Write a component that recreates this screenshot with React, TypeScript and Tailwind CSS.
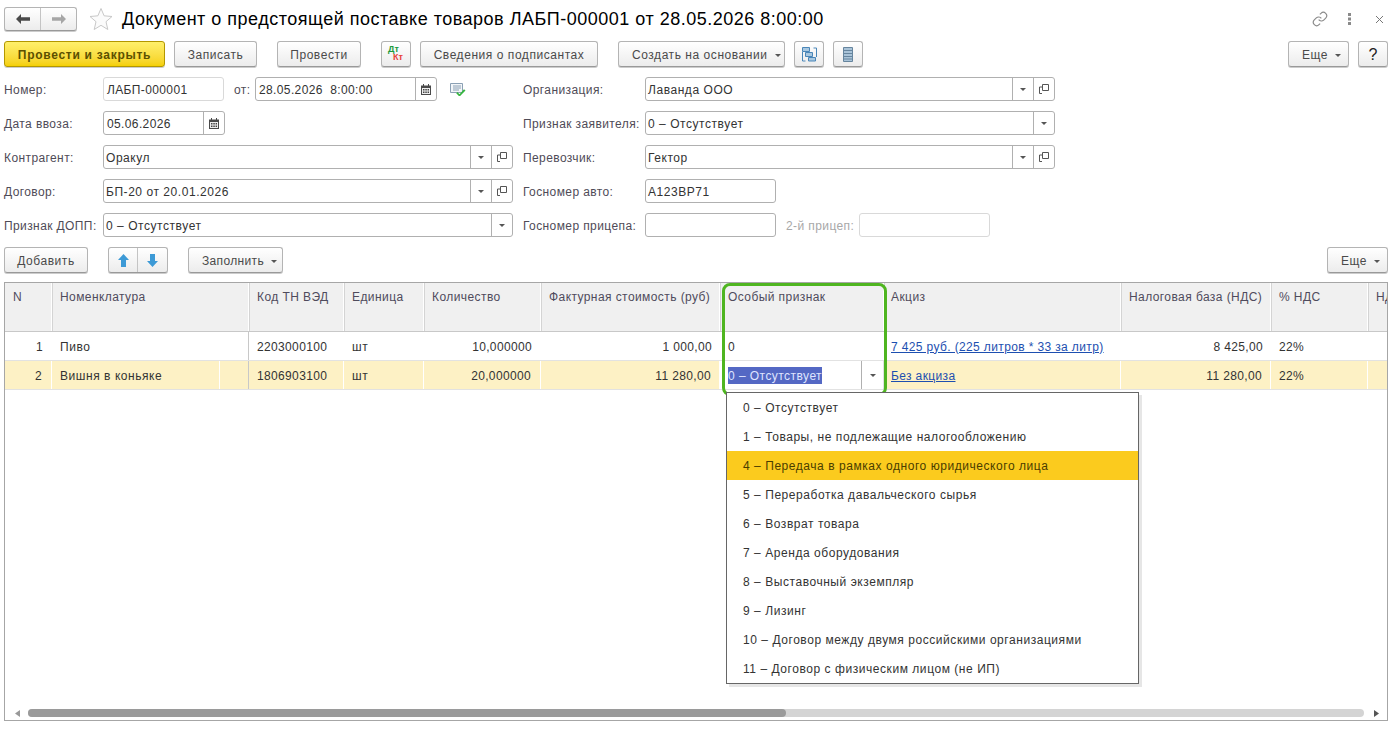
import React from "react";

const Caret = ({ className = "" }: { className?: string }) => (
  <svg width="6" height="3" viewBox="0 0 6 3" className={className}>
    <path d="M0 0h6L3 3z" fill="#555" />
  </svg>
);

const Btn = ({ w, ml = "", caret, children, extra = "" }: { w: string; ml?: string; caret?: boolean; children?: React.ReactNode; extra?: string }) => (
  <div className={`${w} ${ml} ${extra} h-[26px] shrink-0 flex items-center ${caret ? "justify-start pl-[13px]" : "justify-center"} rounded-[3px] border border-[#b4b4b4] border-b-[#999] bg-gradient-to-b from-white to-[#ececec] shadow-[0_1px_0_#ccc] text-[#4a4a4a] pt-px`}>
    {children}
    {caret && <Caret className="ml-[7px] mt-[2px]" />}
  </div>
);

const Seg = ({ w = "w-[21px]", children }: { w?: string; children: React.ReactNode }) => (
  <div className={`${w} h-full shrink-0 border-l border-[#b0b0b0] flex items-center justify-center`}>{children}</div>
);

const CopyIcon = () => (
  <svg width="10" height="10" viewBox="0 0 10 10" fill="none" stroke="#555" strokeWidth="1">
    <path d="M3.500.5h6v6h-6z" />
    <path d="M3 3H.5v6.500H3" />
  </svg>
);

const CalIcon = () => (
  <svg width="10" height="11" viewBox="0 0 10 11">
    <path d="M0 1.500h10V11H0z" fill="#4a4a4a" />
    <path d="M2 0h1v2H2zM7 0h1v2H7z" fill="#4a4a4a" />
    <path d="M1 4h8v6H1z" fill="#eee" />
    <path d="M2 5h1.500v1.500H2zM4.300 5h1.500v1.500H4.300zM6.600 5H8v1.500H6.600zM2 7.500h1.500V9H2zM4.300 7.500h1.500V9H4.300zM6.600 7.500H8V9H6.600z" fill="#444" />
  </svg>
);

const Field = ({ w, text, children, light, disabled, ml = "", num }: { w: string; text?: string; children?: React.ReactNode; light?: boolean; disabled?: boolean; ml?: string; num?: boolean }) => (
  <div className={`${w} ${ml} h-6 shrink-0 flex items-stretch rounded-[3px] border bg-white ${light || disabled ? "border-[#d9d9d9]" : "border-[#b0b0b0]"}`}>
    <div className={`flex-1 min-w-0 pt-px flex items-center text-[#333] whitespace-pre ${num ? "pl-[3px] tracking-[0.37px]" : "pl-[2px]"}`}>{text}</div>
    {children}
  </div>
);

const Label = ({ w, children, ml = "", muted }: { w: string; children: React.ReactNode; ml?: string; muted?: boolean }) => (
  <div className={`${w} ${ml} shrink-0 pt-px flex items-center whitespace-nowrap tracking-[0.4px] ${muted ? "text-[#a8a8a8]" : "text-[#4f4b57]"}`}>{children}</div>
);

const Dd = () => (
  <Seg>
    <Caret />
  </Seg>
);
const Cp = () => (
  <Seg>
    <CopyIcon />
  </Seg>
);

const cols = "grid grid-cols-[47px_197px_95px_80px_117px_179px_164px_237px_150px_97px_40px]";
const headers = ["N", "Номенклатура", "Код ТН ВЭД", "Единица", "Количество", "Фактурная стоимость (руб)", "Особый признак", "Акциз", "Налоговая база (НДС)", "% НДС", "НДС"];

const Link = ({ children }: { children: React.ReactNode }) => <span className="text-[#1d4fb0] underline tracking-[0.37px]">{children}</span>;

const Cell = ({ children, right, line, sel, extra = "" }: { children?: React.ReactNode; right?: boolean; line?: boolean; sel?: boolean; extra?: string }) => (
  <div className={`h-full flex items-center pt-px whitespace-nowrap ${right ? "justify-end pl-2 pr-2" : "pl-2"} ${line ? "border-r border-[#c8c8c8]" : sel ? "border-r border-white" : ""} ${extra}`}>
    {children}
  </div>
);

const Dig = ({ children }: { children: React.ReactNode }) => <span className="tracking-[0.35px]">{children}</span>;

const items = [
  "0 – Отсутствует",
  "1 – Товары, не подлежащие налогообложению",
  "4 – Передача в рамках одного юридического лица",
  "5 – Переработка давальческого сырья",
  "6 – Возврат товара",
  "7 – Аренда оборудования",
  "8 – Выставочный экземпляр",
  "9 – Лизинг",
  "10 – Договор между двумя российскими организациями",
  "11 – Договор с физическим лицом (не ИП)",
];

export default function App() {
  return (
    <div className="w-[1395px] h-[730px] overflow-hidden bg-white pl-1 pr-[7px] pt-[7px] font-['Liberation_Sans',Arial,sans-serif] text-[12px] tracking-[0.55px] text-[#333] leading-none">
      {/* title */}
      <div className="h-6 flex items-center">
        <div className="w-[73px] h-6 flex rounded-[3px] border border-[#b4b4b4] border-b-[#999] bg-gradient-to-b from-white to-[#ececec] shadow-[0_1px_0_#ccc]">
          <div className="w-9 border-r border-[#c4c4c4] flex items-center justify-center">
            <svg width="14" height="10" viewBox="0 0 14 10"><path d="M0 5l5-5v3.300h9v3.400H5V10z" fill="#4a4a4a" /></svg>
          </div>
          <div className="flex-1 flex items-center justify-center">
            <svg width="14" height="10" viewBox="0 0 14 10"><path d="M14 5L9 0v3.300H0v3.400h9V10z" fill="#a6a6a6" /></svg>
          </div>
        </div>
        <svg width="24" height="24" viewBox="0 0 24 24" className="ml-3" fill="#fbfbfb" stroke="#c8c8c8" strokeWidth="1">
          <path d="M12 1.500l3.100 7.300 7.900.7-6 5.200 1.800 7.800L12 18.300l-6.800 4.200L7 14.700 1 9.500l7.900-.7z" />
        </svg>
        <div className="ml-[9px] text-[18px] tracking-[0.5px] text-black whitespace-nowrap">Документ о предстоящей поставке товаров ЛАБП-000001 от 28.05.2026 8:00:00</div>
        <div className="ml-auto flex items-center">
          <svg width="16" height="16" viewBox="0 0 24 24" fill="none" stroke="#8a8a8a" strokeWidth="1.700">
            <path d="M10 13a5 5 0 0 0 7.540.54l3-3a5 5 0 0 0-7.070-7.070l-1.720 1.710" />
            <path d="M14 11a5 5 0 0 0-7.540-.54l-3 3a5 5 0 0 0 7.070 7.070l1.710-1.710" />
          </svg>
          <svg width="4" height="12" viewBox="0 0 4 12" className="ml-[20px]" fill="#8a8a8a">
            <path d="M0 0h3v3H0zM0 4.500h3v3H0zM0 9h3v3H0z" />
          </svg>
          <svg width="9" height="9" viewBox="0 0 9 9" className="ml-[23px] mr-[4px]" stroke="#777" strokeWidth="1"><path d="M1 1l7 7M8 1L1 8" /></svg>
        </div>
      </div>

      {/* buttons */}
      <div className="mt-[10px] h-[26px] flex items-center">
        <div className="w-[161px] h-[26px] shrink-0 pt-px flex items-center justify-center rounded-[3px] border border-[#b39700] bg-gradient-to-b from-[#fff06a] to-[#f5d000] shadow-[0_1px_0_#ccc] font-bold tracking-[0.72px] text-[#5c5000]">Провести и закрыть</div>
        <Btn w="w-[83px]" ml="ml-[9px]">Записать</Btn>
        <Btn w="w-[84px]" ml="ml-[20px]">Провести</Btn>
        <Btn w="w-[30px]" ml="ml-[20px]" extra="relative">
          <span className="absolute left-[6px] top-[3px] text-[9px] tracking-normal font-bold text-[#1a9a3c]">Дт</span>
          <span className="absolute left-[11px] top-[11px] text-[9px] tracking-normal font-bold text-[#e8413a]">Кт</span>
        </Btn>
        <Btn w="w-[178px]" ml="ml-[9px]">Сведения о подписантах</Btn>
        <Btn w="w-[167px]" ml="ml-[20px]" caret>Создать на основании</Btn>
        <Btn w="w-[30px]" ml="ml-[9px]">
          <svg width="15" height="15" viewBox="0 0 15 15" fill="#a9c8e0" stroke="#4a86b8">
            <path d="M.5 5v9h3" fill="none" />
            <path d="M14.500 10V1h-3" fill="none" />
            <path d="M.5.500h7v4h-7z" />
            <path d="M3.500 5.500h7v4h-7z" />
            <path d="M6.500 10.500h7v3.500h-7z" />
          </svg>
        </Btn>
        <Btn w="w-[30px]" ml="ml-[9px]">
          <svg width="10" height="15" viewBox="0 0 10 15" fill="#a9c3d8" stroke="#66859e">
            <path d="M.5.500h9v14h-9z" />
            <path d="M.5 3.500h9M.5 6.500h9M.5 9.500h9M.5 12h9" fill="none" />
          </svg>
        </Btn>
        <Btn w="w-[61px]" ml="ml-auto" caret>Еще</Btn>
        <Btn w="w-[30px]" ml="ml-[9px]"><span className="text-[16px] tracking-normal text-[#222]">?</span></Btn>
      </div>

      {/* form */}
      <div className="mt-[10px] flex flex-col gap-[10px]">
        <div className="h-6 flex">
          <Label w="w-[99px]">Номер:</Label>
          <Field w="w-[121px]" text="ЛАБП-000001" light num />
          <Label w="w-[21px]" ml="ml-[10px]">от:</Label>
          <Field w="w-[182px]" text="28.05.2026  8:00:00" num>
            <Seg w="w-[21px]"><CalIcon /></Seg>
          </Field>
          <div className="w-[86px] shrink-0 pl-[13px] flex items-center">
            <svg width="16" height="14" viewBox="0 0 16 14">
              <path d="M.5 1.500h12v9H.5z" fill="#f2f5f8" stroke="#8ba0b4" />
              <path d="M3 4h8M3 6h8M3 8h6" stroke="#8ba0b4" />
              <path d="M7.500 10l2 2.200 4.500-5 1.500 1.400-6 6-3.300-3.300z" fill="#35b53f" />
            </svg>
          </div>
          <Label w="w-[122px]">Организация:</Label>
          <Field w="w-[410px]" text="Лаванда ООО"><Dd /><Cp /></Field>
        </div>
        <div className="h-6 flex">
          <Label w="w-[99px]">Дата ввоза:</Label>
          <Field w="w-[122px]" text="05.06.2026" num><Seg><CalIcon /></Seg></Field>
          <div className="w-[298px] shrink-0" />
          <Label w="w-[122px]">Признак заявителя:</Label>
          <Field w="w-[410px]" text="0 – Отсутствует"><Dd /></Field>
        </div>
        <div className="h-6 flex">
          <Label w="w-[99px]">Контрагент:</Label>
          <Field w="w-[410px]" text="Оракул"><Dd /><Cp /></Field>
          <div className="w-[10px] shrink-0" />
          <Label w="w-[122px]">Перевозчик:</Label>
          <Field w="w-[410px]" text="Гектор"><Dd /><Cp /></Field>
        </div>
        <div className="h-6 flex">
          <Label w="w-[99px]">Договор:</Label>
          <Field w="w-[410px]" text="БП-20 от 20.01.2026"><Dd /><Cp /></Field>
          <div className="w-[10px] shrink-0" />
          <Label w="w-[122px]">Госномер авто:</Label>
          <Field w="w-[131px]" text="А123ВР71" />
        </div>
        <div className="h-6 flex">
          <Label w="w-[99px]">Признак ДОПП:</Label>
          <Field w="w-[410px]" text="0 – Отсутствует"><Dd /></Field>
          <div className="w-[10px] shrink-0" />
          <Label w="w-[122px]">Госномер прицепа:</Label>
          <Field w="w-[131px]" />
          <Label w="w-[73px]" ml="ml-[10px]" muted>2-й прицеп:</Label>
          <Field w="w-[131px]" disabled />
        </div>
      </div>

      {/* table toolbar */}
      <div className="mt-[10px] h-[26px] flex items-center">
        <Btn w="w-[84px]">Добавить</Btn>
        <div className="ml-5 w-[60px] h-[26px] flex rounded-[3px] border border-[#b4b4b4] border-b-[#999] bg-gradient-to-b from-white to-[#ececec] shadow-[0_1px_0_#ccc]">
          <div className="w-[29px] border-r border-[#c4c4c4] flex items-center justify-center">
            <svg width="11" height="13" viewBox="0 0 11 13"><path d="M5.500 0L11 6H8v7H3V6H0z" fill="#3d9ad6" /></svg>
          </div>
          <div className="flex-1 flex items-center justify-center">
            <svg width="11" height="13" viewBox="0 0 11 13"><path d="M5.500 13L0 7h3V0h5v7h3z" fill="#3d9ad6" /></svg>
          </div>
        </div>
        <Btn w="w-[95px]" ml="ml-5" caret><span className="tracking-[0.35px]">Заполнить</span></Btn>
        <Btn w="w-[61px]" ml="ml-auto" caret>Еще</Btn>
      </div>

      {/* table */}
      <div className="relative mt-[9px] w-[1384px] h-[439px] border border-[#a6a6a6]">
        <div className="h-[423px] overflow-hidden">
          <div className={`${cols} h-[49px] border-b border-[#c8c8c8]`}>
            {headers.map((h, i) => (
              <div key={i} className={`bg-[#f0f0f0] h-[48px] border-r border-white pt-2 whitespace-nowrap tracking-[0.42px] text-[#4f4b5c] ${i === 0 ? "pl-2" : i === 7 ? "pl-[6px] border-l border-l-[#d4d4d4]" : "pl-[7px] border-l border-l-[#d4d4d4]"}`}>{h}</div>
            ))}
          </div>
          <div className={`${cols} h-[29px] border-b border-[#e2e2e2]`}>
            <Cell right extra="!pr-[9px]"><Dig>1</Dig></Cell>
            <Cell line>Пиво</Cell>
            <Cell><Dig>2203000100</Dig></Cell>
            <Cell>шт</Cell>
            <Cell right extra="!pr-[9px]"><Dig>10,000000</Dig></Cell>
            <Cell right><Dig>1 000,00</Dig></Cell>
            <Cell><Dig>0</Dig></Cell>
            <Cell extra="!pl-[7px]"><Link>7 425 руб. (225 литров * 33 за литр)</Link></Cell>
            <Cell right><Dig>8 425,00</Dig></Cell>
            <Cell><Dig>22%</Dig></Cell>
            <Cell />
          </div>
          <div className={`${cols} h-[29px] border-b border-[#e2e2e2] bg-[#fdf1c5]`}>
            <Cell right sel extra="!pr-[9px]"><Dig>2</Dig></Cell>
            <Cell line extra="!pl-0 !pt-0">
              <div className="w-[168px] h-full pl-2 pt-px flex items-center border-r border-white">Вишня в коньяке</div>
            </Cell>
            <Cell sel><Dig>1806903100</Dig></Cell>
            <Cell sel>шт</Cell>
            <Cell right sel extra="!pr-[9px]"><Dig>20,000000</Dig></Cell>
            <Cell right sel><Dig>11 280,00</Dig></Cell>
            <div className="h-full bg-white flex items-center pl-2 border-r border-[#e0e0e0]">
              <span className="w-[133px] shrink-0"><span className="inline-block bg-[#5468c4] text-[#dfe4ff] pt-[3px] pb-[2px] tracking-[0.45px]">0 – Отсутствует</span></span>
              <div className="flex-1 h-full border-l border-[#b0b0b0] flex items-center justify-center"><Caret /></div>
            </div>
            <Cell sel extra="!pl-[7px]"><Link>Без акциза</Link></Cell>
            <Cell right sel><Dig>11 280,00</Dig></Cell>
            <Cell sel><Dig>22%</Dig></Cell>
            <Cell />
          </div>
        </div>

        {/* horizontal scrollbar */}
        <div className="h-[14px] flex items-center pl-[10px] pr-[8px]">
          <svg width="5" height="7" viewBox="0 0 5 7" className="shrink-0"><path d="M5 0v7L0 3.500z" fill="#999" /></svg>
          <div className="ml-[8px] flex-1 h-2 rounded-full bg-[#d4d4d4]">
            <div className="w-[758px] h-full rounded-full bg-[#9a9a9a]" />
          </div>
          <svg width="5" height="7" viewBox="0 0 5 7" className="ml-[10px] shrink-0"><path d="M0 0v7l5-3.500z" fill="#555" /></svg>
        </div>

        {/* highlight frame */}
        <div className="absolute left-[717px] top-0 w-[165px] h-[113px] rounded-[8px] border-[3px] border-[#4fb520]" />

        {/* dropdown */}
        <div className="absolute left-[721px] top-[109px] w-[413px] h-[292px] border border-[#666] bg-white shadow-[3px_3px_0_#e6e6e6]">
          {items.map((t, i) => (
            <div key={t} className={`h-[29px] flex items-center pl-4 whitespace-nowrap ${i === 2 ? "bg-[#fbcb1e] text-[#4a3d00]" : "text-[#333]"}`}>{t}</div>
          ))}
        </div>
      </div>
    </div>
  );
}
